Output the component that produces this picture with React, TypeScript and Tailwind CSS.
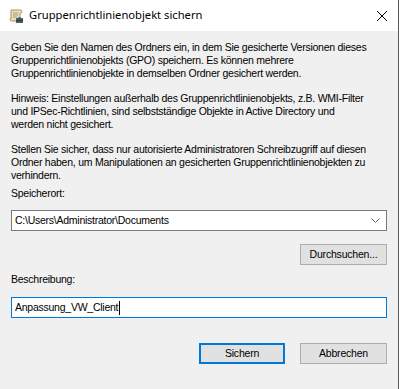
import { useState } from 'react'

function GpoIcon() {
  return (
    <svg width="16" height="16" viewBox="0 0 16 16" className="shrink-0">
      <path d="M3 2h9.5a1.5 1.5 0 0 1 0 3H12v8H3.5a1.5 1.5 0 0 1 0-3H3z" fill="#e9dfb8" stroke="#8c7f55" strokeWidth="0.8" />
      <path d="M5 5h5M5 7h5M5 9h4" stroke="#8c8c8c" strokeWidth="0.8" />
      <rect x="8" y="10" width="7" height="5" rx="0.5" fill="#4a5a66" />
      <rect x="8" y="12" width="7" height="1" fill="#2d3840" />
      <rect x="10.5" y="9" width="2" height="1.2" fill="#4a5a66" />
    </svg>
  )
}

function WinButton({ label, primary }: { label: string; primary?: boolean }) {
  return (
    <button
      className={
        'h-[21px] flex items-center justify-center bg-[#e1e1e1] text-[10.5px] tracking-[-0.2px] text-black ' +
        (primary ? 'w-[86px] border-2 border-[#0078d7]' : 'w-[87px] border border-[#adadad]')
      }
    >
      {label}
    </button>
  )
}

export default function App() {
  const [ort] = useState('C:\\Users\\Administrator\\Documents')
  const [beschreibung] = useState('Anpassung_VW_Client')

  return (
    <div className="w-[399px] h-[389px] flex flex-col bg-[#f0f0f0] border-r border-[#5a5a5a] font-['Liberation_Sans',Arial,sans-serif] text-black overflow-hidden">
      <div className="h-[31px] bg-white flex items-center pl-[8px] pr-[10px] shrink-0">
        <GpoIcon />
        <span className="ml-[5px] text-[11.2px] font-['Noto_Sans',sans-serif] text-black">Gruppenrichtlinienobjekt sichern</span>
        <svg width="12" height="12" viewBox="0 0 12 12" className="ml-auto">
          <path d="M1 1l10 10M11 1L1 11" stroke="#000" strokeWidth="1" />
        </svg>
      </div>

      <div className="flex flex-col px-[11px] pt-[10px] text-[10.5px] tracking-[-0.25px] leading-[13px] whitespace-nowrap">
        <p>
          Geben Sie den Namen des Ordners ein, in dem Sie gesicherte Versionen dieses<br />
          Gruppenrichtlinienobjekts (GPO) speichern. Es können mehrere<br />
          Gruppenrichtlinienobjekte in demselben Ordner gesichert werden.
        </p>
        <p className="mt-[12px]">
          Hinweis: Einstellungen außerhalb des Gruppenrichtlinienobjekts, z.B. WMI-Filter<br />
          und IPSec-Richtlinien, sind selbstständige Objekte in Active Directory und<br />
          werden nicht gesichert.
        </p>
        <p className="mt-[12px]">
          Stellen Sie sicher, dass nur autorisierte Administratoren Schreibzugriff auf diesen<br />
          Ordner haben, um Manipulationen an gesicherten Gruppenrichtlinienobjekten zu<br />
          verhindern.
        </p>

        <label className="mt-[5px]">Speicherort:</label>
        <div className="mt-[10px] h-[21px] bg-white border border-[#7a7a7a] flex items-center pl-[3px] pr-[6px]">
          <span className="flex-1">{ort}</span>
          <svg width="9" height="6" viewBox="0 0 9 6">
            <path d="M0.5 0.5l4 4 4-4" stroke="#606060" fill="none" strokeWidth="1" />
          </svg>
        </div>
        <div className="mt-[13px] flex justify-end">
          <WinButton label="Durchsuchen..." />
        </div>

        <label className="mt-[8px]">Beschreibung:</label>
        <div className="mt-[11px] h-[21px] bg-white border border-[#0078d7] flex items-center pl-[3px]">
          <span>{beschreibung}</span>
          <span className="ml-[1px] w-[1px] h-[14px] bg-black" />
        </div>

        <div className="mt-[25px] flex justify-end gap-[15px]">
          <WinButton label="Sichern" primary />
          <WinButton label="Abbrechen" />
        </div>
      </div>
    </div>
  )
}
